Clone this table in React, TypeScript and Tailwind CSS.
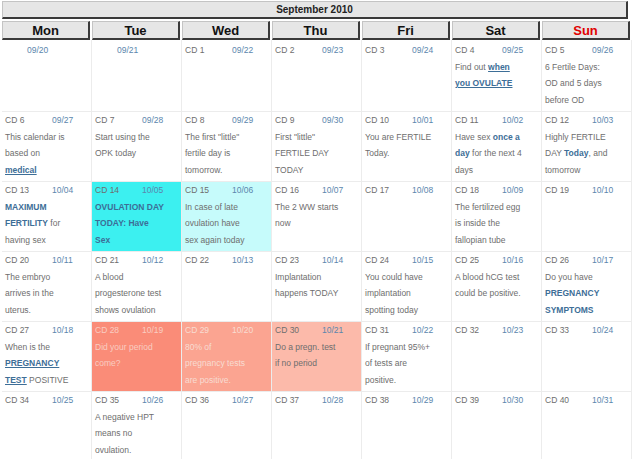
import React from "react";

type Cell = {
  cd?: string;
  date: string;
  bg?: string;
  tone?: string;
  body?: React.ReactNode;
};

const B = ({ children }: { children: React.ReactNode }) => (
  <span className="font-bold text-[#3d6e97]">{children}</span>
);
const L = ({ children }: { children: React.ReactNode }) => (
  <span className="font-bold text-[#3d6e97] underline">{children}</span>
);

const rows: Cell[][] = [
  [
    { date: "09/20" },
    { date: "09/21" },
    { cd: "CD 1", date: "09/22" },
    { cd: "CD 2", date: "09/23" },
    { cd: "CD 3", date: "09/24" },
    {
      cd: "CD 4",
      date: "09/25",
      body: (
        <>
          Find out <L>when</L>
          <br />
          <L>you OVULATE</L>
        </>
      ),
    },
    {
      cd: "CD 5",
      date: "09/26",
      body: (
        <>
          6 Fertile Days:
          <br />
          OD and 5 days
          <br />
          before OD
        </>
      ),
    },
  ],
  [
    {
      cd: "CD 6",
      date: "09/27",
      body: (
        <>
          This calendar is
          <br />
          based on
          <br />
          <L>medical</L>
        </>
      ),
    },
    {
      cd: "CD 7",
      date: "09/28",
      body: (
        <>
          Start using the
          <br />
          OPK today
        </>
      ),
    },
    {
      cd: "CD 8",
      date: "09/29",
      body: (
        <>
          The first "little"
          <br />
          fertile day is
          <br />
          tomorrow.
        </>
      ),
    },
    {
      cd: "CD 9",
      date: "09/30",
      body: (
        <>
          First "little"
          <br />
          FERTILE DAY
          <br />
          TODAY
        </>
      ),
    },
    {
      cd: "CD 10",
      date: "10/01",
      body: (
        <>
          You are FERTILE
          <br />
          Today.
        </>
      ),
    },
    {
      cd: "CD 11",
      date: "10/02",
      body: (
        <>
          Have sex <B>once a</B>
          <br />
          <B>day</B> for the next 4
          <br />
          days
        </>
      ),
    },
    {
      cd: "CD 12",
      date: "10/03",
      body: (
        <>
          Highly FERTILE
          <br />
          DAY <B>Today</B>, and
          <br />
          tomorrow
        </>
      ),
    },
  ],
  [
    {
      cd: "CD 13",
      date: "10/04",
      body: (
        <>
          <B>MAXIMUM</B>
          <br />
          <B>FERTILITY</B> for
          <br />
          having sex
        </>
      ),
    },
    {
      cd: "CD 14",
      date: "10/05",
      bg: "bg-[#3cf0f0]",
      body: (
        <>
          <B>OVULATION DAY</B>
          <br />
          <B>TODAY: Have</B>
          <br />
          <B>Sex</B>
        </>
      ),
    },
    {
      cd: "CD 15",
      date: "10/06",
      bg: "bg-[#c6fbfb]",
      body: (
        <>
          In case of late
          <br />
          ovulation have
          <br />
          sex again today
        </>
      ),
    },
    {
      cd: "CD 16",
      date: "10/07",
      body: (
        <>
          The 2 WW starts
          <br />
          now
        </>
      ),
    },
    { cd: "CD 17", date: "10/08" },
    {
      cd: "CD 18",
      date: "10/09",
      body: (
        <>
          The fertilized egg
          <br />
          is inside the
          <br />
          fallopian tube
        </>
      ),
    },
    { cd: "CD 19", date: "10/10" },
  ],
  [
    {
      cd: "CD 20",
      date: "10/11",
      body: (
        <>
          The embryo
          <br />
          arrives in the
          <br />
          uterus.
        </>
      ),
    },
    {
      cd: "CD 21",
      date: "10/12",
      body: (
        <>
          A blood
          <br />
          progesterone test
          <br />
          shows ovulation
        </>
      ),
    },
    { cd: "CD 22", date: "10/13" },
    {
      cd: "CD 23",
      date: "10/14",
      body: (
        <>
          Implantation
          <br />
          happens TODAY
        </>
      ),
    },
    {
      cd: "CD 24",
      date: "10/15",
      body: (
        <>
          You could have
          <br />
          implantation
          <br />
          spotting today
        </>
      ),
    },
    {
      cd: "CD 25",
      date: "10/16",
      body: (
        <>
          A blood hCG test
          <br />
          could be positive.
        </>
      ),
    },
    {
      cd: "CD 26",
      date: "10/17",
      body: (
        <>
          Do you have
          <br />
          <B>PREGNANCY</B>
          <br />
          <B>SYMPTOMS</B>
        </>
      ),
    },
  ],
  [
    {
      cd: "CD 27",
      date: "10/18",
      body: (
        <>
          When is the
          <br />
          <L>PREGNANCY</L>
          <br />
          <L>TEST</L> POSITIVE
        </>
      ),
    },
    {
      cd: "CD 28",
      date: "10/19",
      bg: "bg-[#fa8c78]",
      tone: "text-[#f9cdc2]",
      body: (
        <>
          Did your period
          <br />
          come?
        </>
      ),
    },
    {
      cd: "CD 29",
      date: "10/20",
      bg: "bg-[#fba491]",
      tone: "text-[#f8dcd2]",
      body: (
        <>
          80% of
          <br />
          pregnancy tests
          <br />
          are positive.
        </>
      ),
    },
    {
      cd: "CD 30",
      date: "10/21",
      bg: "bg-[#fcbaaa]",
      body: (
        <>
          Do a pregn. test
          <br />
          if no period
        </>
      ),
    },
    {
      cd: "CD 31",
      date: "10/22",
      body: (
        <>
          If pregnant 95%+
          <br />
          of tests are
          <br />
          positive.
        </>
      ),
    },
    { cd: "CD 32", date: "10/23" },
    { cd: "CD 33", date: "10/24" },
  ],
  [
    { cd: "CD 34", date: "10/25" },
    {
      cd: "CD 35",
      date: "10/26",
      body: (
        <>
          A negative HPT
          <br />
          means no
          <br />
          ovulation.
        </>
      ),
    },
    { cd: "CD 36", date: "10/27" },
    { cd: "CD 37", date: "10/28" },
    { cd: "CD 38", date: "10/29" },
    { cd: "CD 39", date: "10/30" },
    { cd: "CD 40", date: "10/31" },
  ],
];

const rowH = ["h-[72px] pt-[2px]", "h-[70px]", "h-[70px]", "h-[70px]", "h-[70px]", "h-[70px]"];

const days = ["Mon", "Tue", "Wed", "Thu", "Fri", "Sat", "Sun"];

export default function App() {
  return (
    <div
      className="w-[640px] h-[459px] bg-white overflow-hidden"
      style={{ fontFamily: '"Liberation Sans", Arial, sans-serif' }}
    >
      <div className="mx-[2px] mt-[1px] w-[626px] h-[18px] bg-[#e6e6e6] border-t border-l border-[#c4c4c4] border-b-2 border-r-2 border-b-[#3a3a3a] border-r-[#3a3a3a] flex items-center justify-center">
        <span className="text-[10px] font-bold text-[#222]">September 2010</span>
      </div>
      <div className="ml-[2px] mt-[2px] grid grid-cols-[repeat(7,88px)] gap-x-[2px]">
        {days.map((d) => (
          <div
            key={d}
            className="h-[19px] bg-[#e6e6e6] border-t border-l border-[#c4c4c4] border-b-2 border-r-2 border-b-[#3a3a3a] border-r-[#3a3a3a] flex items-center justify-center"
          >
            <span
              className={
                "text-[13px] font-bold leading-none " +
                (d === "Sun" ? "text-[#e00000]" : "text-[#111]")
              }
            >
              {d}
            </span>
          </div>
        ))}
      </div>
      <div className="ml-[2px] flex flex-col">
        {rows.map((row, ri) => (
          <div key={ri} className="grid grid-cols-[repeat(7,90px)]">
            {row.map((c, ci) => (
              <div
                key={ci}
                className={
                  rowH[ri] +
                  " box-border border-b border-r border-[#ececec] pl-[3px] text-[8.5px] leading-[16.5px] whitespace-nowrap " +
                  (c.bg ?? "bg-white") +
                  " " +
                  (c.tone ?? "text-[#6e6e6e]")
                }
              >
                <div className="flex">
                  {c.cd ? (
                    <span className="w-[47px]">{c.cd}</span>
                  ) : (
                    <span className="w-[22px]" />
                  )}
                  <span className={c.tone ? "" : "text-[#5b86ad]"}>{c.date}</span>
                </div>
                {c.body && <div>{c.body}</div>}
              </div>
            ))}
          </div>
        ))}
      </div>
    </div>
  );
}
